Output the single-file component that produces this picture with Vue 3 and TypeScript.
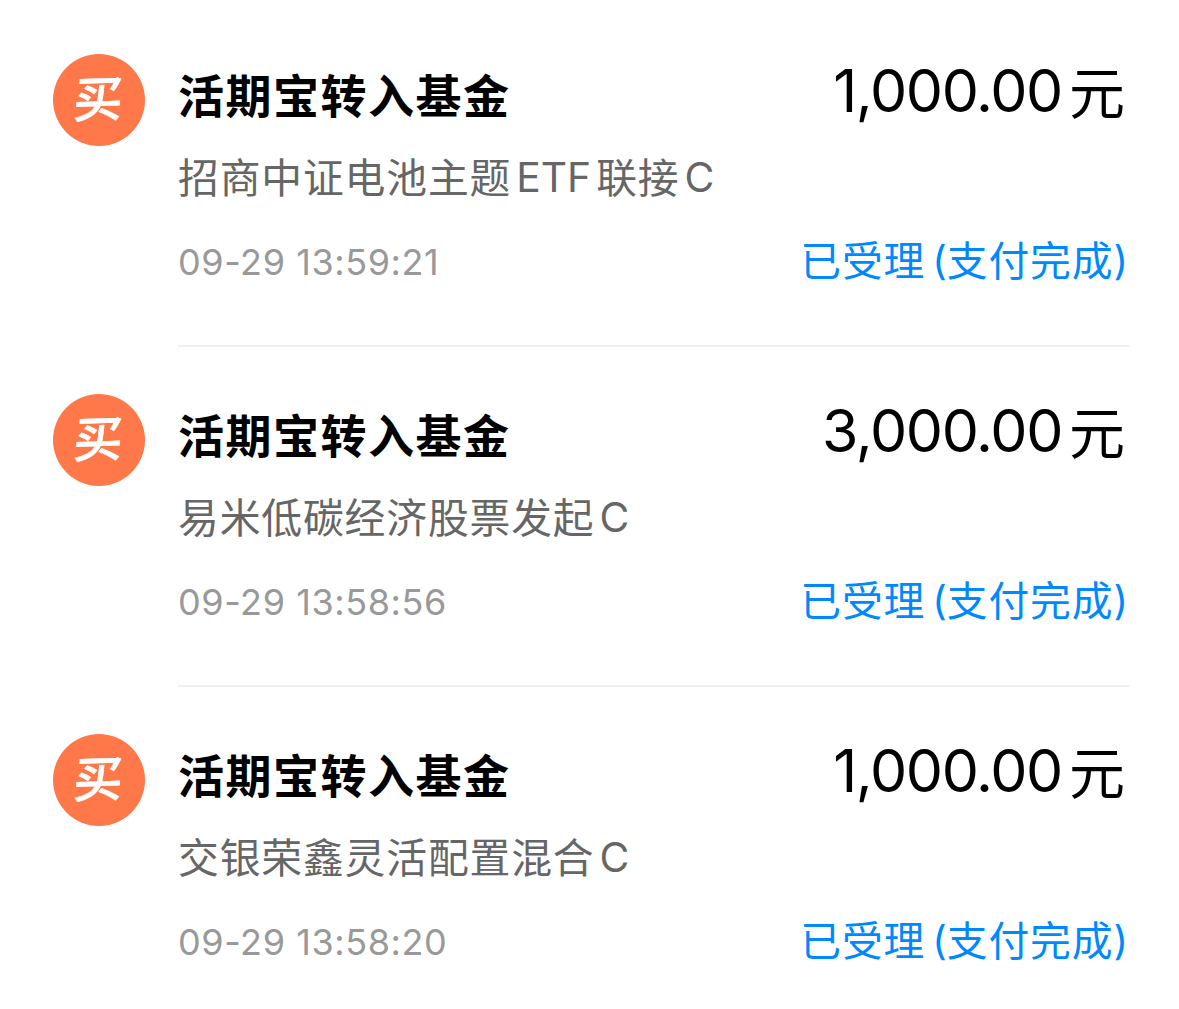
<script setup lang="ts">
interface TextPart {
  text: string
  latin?: boolean
}

interface Transaction {
  id: number
  title: string
  fund: TextPart[]
  time: string
  amount: string
}

const transactions: Transaction[] = [
  {
    id: 1,
    title: '活期宝转入基金',
    fund: [{ text: '招商中证电池主题' }, { text: 'ETF', latin: true }, { text: '联接' }, { text: 'C', latin: true }],
    time: '09-29 13:59:21',
    amount: '1,000.00',
  },
  {
    id: 2,
    title: '活期宝转入基金',
    fund: [{ text: '易米低碳经济股票发起' }, { text: 'C', latin: true }],
    time: '09-29 13:58:56',
    amount: '3,000.00',
  },
  {
    id: 3,
    title: '活期宝转入基金',
    fund: [{ text: '交银荣鑫灵活配置混合' }, { text: 'C', latin: true }],
    time: '09-29 13:58:20',
    amount: '1,000.00',
  },
]
</script>

<template>
  <main class="list">
    <article v-for="item in transactions" :key="item.id" class="row">
      <div class="badge"><span class="badge-text">买</span></div>
      <div class="body">
        <header class="line head">
          <h2 class="title">{{ item.title }}</h2>
          <p class="amount"><span class="number">{{ item.amount }}</span><span class="unit">元</span></p>
        </header>
        <p class="fund">
          <span v-for="(part, i) in item.fund" :key="i" :class="{ latin: part.latin }">{{ part.text }}</span>
        </p>
        <footer class="line foot">
          <time class="time">{{ item.time }}</time>
          <p class="status"><span>已受理</span><span class="paren open">(</span><span>支付完成</span><span class="paren">)</span></p>
        </footer>
      </div>
    </article>
  </main>
</template>

<style>
body {
  background: #fff;
  overflow: hidden;
}
</style>

<style scoped>
.list {
  box-sizing: border-box;
  width: 1179px;
  height: 1009px;
  padding: 7px 50px 0 53px;
  overflow: hidden;
  font-family: Inter, "Noto Sans CJK SC", sans-serif;
  background: #fff;
}

h2,
p {
  margin: 0;
  white-space: nowrap;
}

.row {
  display: flex;
  gap: 33px;
  height: 340px;
}

.badge {
  display: flex;
  flex: none;
  align-items: center;
  justify-content: center;
  width: 92px;
  height: 92px;
  margin-top: 47px;
  border-radius: 50%;
  background: #ff784a;
  color: #fff;
}

.badge-text {
  font: 500 49px/48px "Noto Sans CJK SC", sans-serif;
  -webkit-text-stroke: 0.6px #fff;
  transform: translateY(-4px) skewX(-5deg) rotate(-2deg);
}

.body {
  box-sizing: border-box;
  display: flex;
  flex: 1;
  flex-direction: column;
  padding-top: 47px;
  border-bottom: 2px solid #efefef;
}

.row:last-child .body {
  border-bottom: 0;
}

.line {
  display: flex;
  justify-content: space-between;
}

.head {
  height: 92px;
}

.title {
  font: 700 46px/78px "Noto Sans CJK SC", sans-serif;
  letter-spacing: 1.5px;
}

.amount {
  display: flex;
  margin-right: 4px;
  color: #000;
}

.number {
  font-size: 59px;
  line-height: 73px;
  letter-spacing: -1.35px;
}

.unit {
  margin-left: 7px;
  font: 400 56px/71px "Noto Sans CJK SC", sans-serif;
}

.fund {
  display: flex;
  height: 64px;
  color: #666;
  font: 400 40.8px/60px "Noto Sans CJK SC", sans-serif;
  letter-spacing: 0.85px;
}

.latin {
  margin: 0 5px;
  font: 400 40.8px/63px Inter, sans-serif;
  letter-spacing: 0;
}

.foot {
  height: 100px;
}

.time {
  color: #999;
  font-size: 36px;
  line-height: 104px;
  letter-spacing: 0.58px;
}

.status {
  display: flex;
  margin-right: 1px;
  color: #0089ff;
  font: 400 40.8px/97px "Noto Sans CJK SC", sans-serif;
  letter-spacing: 0.85px;
}

.paren {
  font: 400 40px/102px Inter, sans-serif;
  letter-spacing: 0;
}

.open {
  margin-left: 7px;
}
</style>
